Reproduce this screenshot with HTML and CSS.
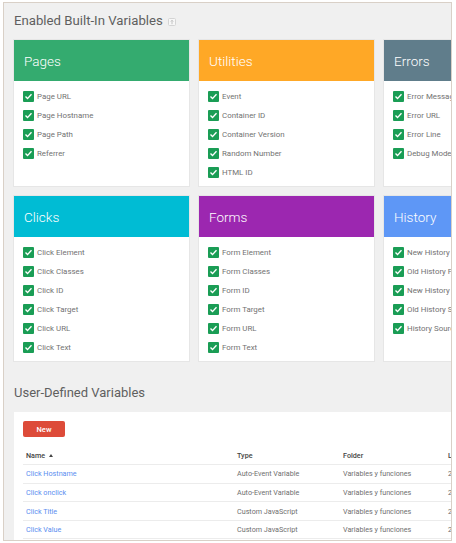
FILE: index.html
```html
<!DOCTYPE html>
<html lang="en">
<head>
    <meta charset="UTF-8">
    <title>Variables</title>
    <link rel="stylesheet" href="styles.css">
</head>
<body>
    <div class="frame">
        <h2 class="section-title">Enabled Built-In Variables
            <svg class="help" width="8" height="8" viewBox="0 0 8 8"><rect x="0.5" y="0.5" width="7" height="7" rx="1" fill="#f7f7f7" stroke="#d4d4d4"/><path d="M4 6.2V2.4M2.8 3.5L4 2.3l1.2 1.2" fill="none" stroke="#b5b5b5" stroke-width="0.8"/></svg>
        </h2>

        <div class="cards">
            <div class="card">
                <div class="card-head pages">Pages</div>
                <ul class="card-body">
                    <li><span class="check"></span>Page URL</li>
                    <li><span class="check"></span>Page Hostname</li>
                    <li><span class="check"></span>Page Path</li>
                    <li><span class="check"></span>Referrer</li>
                </ul>
            </div>
            <div class="card">
                <div class="card-head utilities">Utilities</div>
                <ul class="card-body">
                    <li><span class="check"></span>Event</li>
                    <li><span class="check"></span>Container ID</li>
                    <li><span class="check"></span>Container Version</li>
                    <li><span class="check"></span>Random Number</li>
                    <li><span class="check"></span>HTML ID</li>
                </ul>
            </div>
            <div class="card">
                <div class="card-head errors">Errors</div>
                <ul class="card-body">
                    <li><span class="check"></span>Error Message</li>
                    <li><span class="check"></span>Error URL</li>
                    <li><span class="check"></span>Error Line</li>
                    <li><span class="check"></span>Debug Mode</li>
                </ul>
            </div>

            <div class="card">
                <div class="card-head clicks">Clicks</div>
                <ul class="card-body">
                    <li><span class="check"></span>Click Element</li>
                    <li><span class="check"></span>Click Classes</li>
                    <li><span class="check"></span>Click ID</li>
                    <li><span class="check"></span>Click Target</li>
                    <li><span class="check"></span>Click URL</li>
                    <li><span class="check"></span>Click Text</li>
                </ul>
            </div>
            <div class="card">
                <div class="card-head forms">Forms</div>
                <ul class="card-body">
                    <li><span class="check"></span>Form Element</li>
                    <li><span class="check"></span>Form Classes</li>
                    <li><span class="check"></span>Form ID</li>
                    <li><span class="check"></span>Form Target</li>
                    <li><span class="check"></span>Form URL</li>
                    <li><span class="check"></span>Form Text</li>
                </ul>
            </div>
            <div class="card">
                <div class="card-head history">History</div>
                <ul class="card-body">
                    <li><span class="check"></span>New History Fragment</li>
                    <li><span class="check"></span>Old History Fragment</li>
                    <li><span class="check"></span>New History State</li>
                    <li><span class="check"></span>Old History State</li>
                    <li><span class="check"></span>History Source</li>
                </ul>
            </div>
        </div>

        <h2 class="section-title small">User-Defined Variables</h2>

        <div class="panel">
            <button class="new-button">New</button>
            <table class="vars">
                <tr>
                    <th class="col-name">Name <span class="sort"></span></th>
                    <th class="col-type">Type</th>
                    <th class="col-folder">Folder</th>
                    <th class="col-date">Last Edited</th>
                </tr>
                <tr>
                    <td><a href="#">Click Hostname</a></td>
                    <td>Auto-Event Variable</td>
                    <td>Variables y funciones</td>
                    <td>23 days ago</td>
                </tr>
                <tr>
                    <td><a href="#">Click onclick</a></td>
                    <td>Auto-Event Variable</td>
                    <td>Variables y funciones</td>
                    <td>2 days ago</td>
                </tr>
                <tr>
                    <td><a href="#">Click Title</a></td>
                    <td>Custom JavaScript</td>
                    <td>Variables y funciones</td>
                    <td>2 days ago</td>
                </tr>
                <tr>
                    <td><a href="#">Click Value</a></td>
                    <td>Custom JavaScript</td>
                    <td>Variables y funciones</td>
                    <td>2 days ago</td>
                </tr>
            </table>
        </div>
    </div>
</body>
</html>
```

FILE: styles.css
```css
body {
    margin: 0;
    padding: 0;
    background: #fff;
    font-family: Roboto, "Noto Sans", sans-serif;
}

.frame {
    margin: 2px 0 0 3px;
    width: 449px;
    height: 539px;
    box-sizing: border-box;
    border: 1px solid #d9d0c7;
    background: #f0f0f0;
    overflow: hidden;
    padding: 8px 0 0 10px;
}

.section-title {
    margin: 0 0 9px 0;
    font-size: 13.2px;
    line-height: 20px;
    font-weight: 400;
    color: #5f5f5f;
    white-space: nowrap;
}
.section-title.small {
    font-size: 13px;
    line-height: 18px;
    margin: 23px 0 10px 0;
}
.help {
    vertical-align: -1px;
    margin-left: 2px;
}

/* built-in variable cards */
.cards {
    display: grid;
    grid-template-columns: repeat(3, 175px);
    gap: 10px;
    width: 600px;
}
.card {
    background: #fff;
    box-shadow: 0 0 0 1px #e6e6e6;
}
.card-head {
    height: 41px;
    display: flex;
    align-items: center;
    padding-left: 10px;
    font-size: 13.5px;
    font-weight: 300;
    color: #fff;
}
.pages { background: #34ab6f; }
.utilities { background: #ffa826; }
.errors { background: #607d8b; }
.clicks { background: #00bcd4; }
.forms { background: #9c27b0; }
.history { background: #5e97f6; }

.card-body {
    list-style: none;
    margin: 0;
    padding: 6px 10px 4px 9px;
}
.card-body li {
    height: 19px;
    display: flex;
    align-items: center;
    font-size: 7.9px;
    color: #727272;
    white-space: nowrap;
}
.check {
    width: 11px;
    height: 11px;
    margin-right: 3px;
    border-radius: 1px;
    background: #1a9d55 url("data:image/svg+xml,%3Csvg xmlns='http://www.w3.org/2000/svg' viewBox='0 0 11 11'%3E%3Cpath d='M2.5 5.6l2 2 4-4.4' fill='none' stroke='white' stroke-width='1.4'/%3E%3C/svg%3E") no-repeat center;
    flex: none;
}

/* user-defined variables */
.panel {
    background: #fff;
    width: 460px;
    height: 200px;
    padding: 9px 0 0 9px;
    box-sizing: border-box;
}
.new-button {
    display: block;
    width: 42px;
    height: 16px;
    border: none;
    border-radius: 2px;
    background: #dd4b39;
    color: #fff;
    font-family: inherit;
    font-size: 7.5px;
    font-weight: 500;
    padding: 0;
}
.vars {
    margin-top: 9px;
    width: 522px;
    table-layout: fixed;
    border-collapse: collapse;
    font-size: 7.2px;
    color: #6f6f6f;
    white-space: nowrap;
}
.vars th,
.vars td {
    height: 18.6px;
    padding: 0 3px;
    text-align: left;
    border-bottom: 1px solid #ececec;
    box-sizing: border-box;
    overflow: hidden;
}
.vars th {
    font-weight: 500;
    color: #444;
}
.col-name { width: 211px; }
.col-type { width: 106px; }
.col-folder { width: 105px; }
.col-date { width: 100px; }
.vars a {
    color: #5a8ef0;
    text-decoration: none;
}
.sort {
    display: inline-block;
    width: 0;
    height: 0;
    margin-left: 2px;
    vertical-align: 1px;
    border-left: 2.5px solid transparent;
    border-right: 2.5px solid transparent;
    border-bottom: 3px solid #444;
}
```
